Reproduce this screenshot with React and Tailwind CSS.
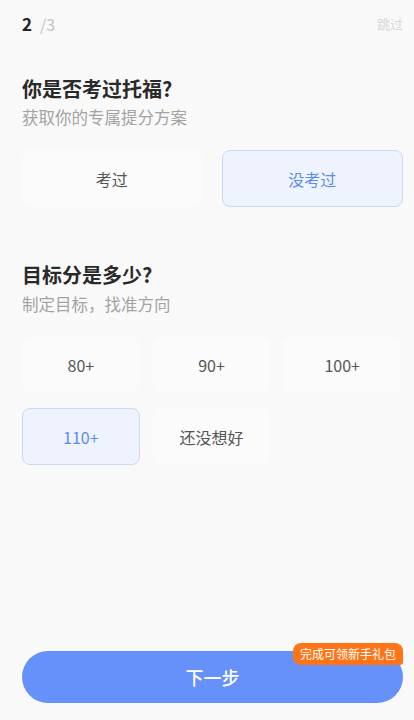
import React from "react";

const font = { fontFamily: '"Noto Sans CJK SC", "Noto Sans", sans-serif' };

export default function App() {
  return (
    <div className="w-[414px] h-[720px] bg-[#f9f9f9] flex flex-col pl-[22px] pr-[11px] overflow-hidden" style={font}>
      <div className="flex items-center justify-between pt-[10px] h-[36px]">
        <div className="flex items-baseline">
          <span className="text-[17px] font-bold text-[#222] leading-none">2</span>
          <span className="text-[16px] text-[#c4c4c4] ml-[8px] leading-none">/3</span>
        </div>
        <span className="text-[13px] text-[#d8d8d8] leading-none">跳过</span>
      </div>

      <div className="mt-[39px] text-[20px] font-bold text-[#2a2a2a] leading-[28px]">你是否考过托福?</div>
      <div className="mt-[3px] text-[16.5px] text-[#a3a3a3] leading-[22px]">获取你的专属提分方案</div>

      <div className="mt-[22px] flex gap-[20px]">
        <div className="flex-1 h-[57px] rounded-[8px] bg-[#fbfbfc] flex items-center justify-center text-[16px] text-[#555]">考过</div>
        <div className="flex-1 h-[57px] rounded-[8px] bg-[#eef3fd] border border-[#cad9f6] flex items-center justify-center text-[16px] text-[#5b8def]">没考过</div>
      </div>

      <div className="mt-[54px] text-[20px] font-bold text-[#2a2a2a] leading-[28px]">目标分是多少?</div>
      <div className="mt-[4px] text-[16.5px] text-[#a3a3a3] leading-[22px]">制定目标，找准方向</div>

      <div className="mt-[22px] grid grid-cols-3 gap-x-[13px] gap-y-[15px] pr-[2px]">
        <div className="h-[56px] rounded-[8px] bg-[#fbfbfc] flex items-center justify-center text-[16px] text-[#555]">80+</div>
        <div className="h-[56px] rounded-[8px] bg-[#fbfbfc] flex items-center justify-center text-[16px] text-[#555]">90+</div>
        <div className="h-[56px] rounded-[8px] bg-[#fbfbfc] flex items-center justify-center text-[16px] text-[#555]">100+</div>
        <div className="h-[57px] rounded-[8px] bg-[#eef3fd] border border-[#cad9f6] flex items-center justify-center text-[16px] text-[#5b8def]">110+</div>
        <div className="h-[57px] rounded-[8px] bg-[#fbfbfc] flex items-center justify-center text-[16px] text-[#555]">还没想好</div>
      </div>

      <div className="flex-1" />

      <div className="relative mb-[17px]">
        <div className="h-[52px] rounded-full bg-[#6690fa] flex items-center justify-center text-[18px] font-medium text-white">下一步</div>
        <div className="absolute right-0 top-[-8px] h-[22px] px-[7px] rounded-t-[8px] rounded-bl-[8px] rounded-br-[3px] bg-[#ff7417] flex items-center text-[12px] text-white leading-none">完成可领新手礼包</div>
      </div>
    </div>
  );
}
